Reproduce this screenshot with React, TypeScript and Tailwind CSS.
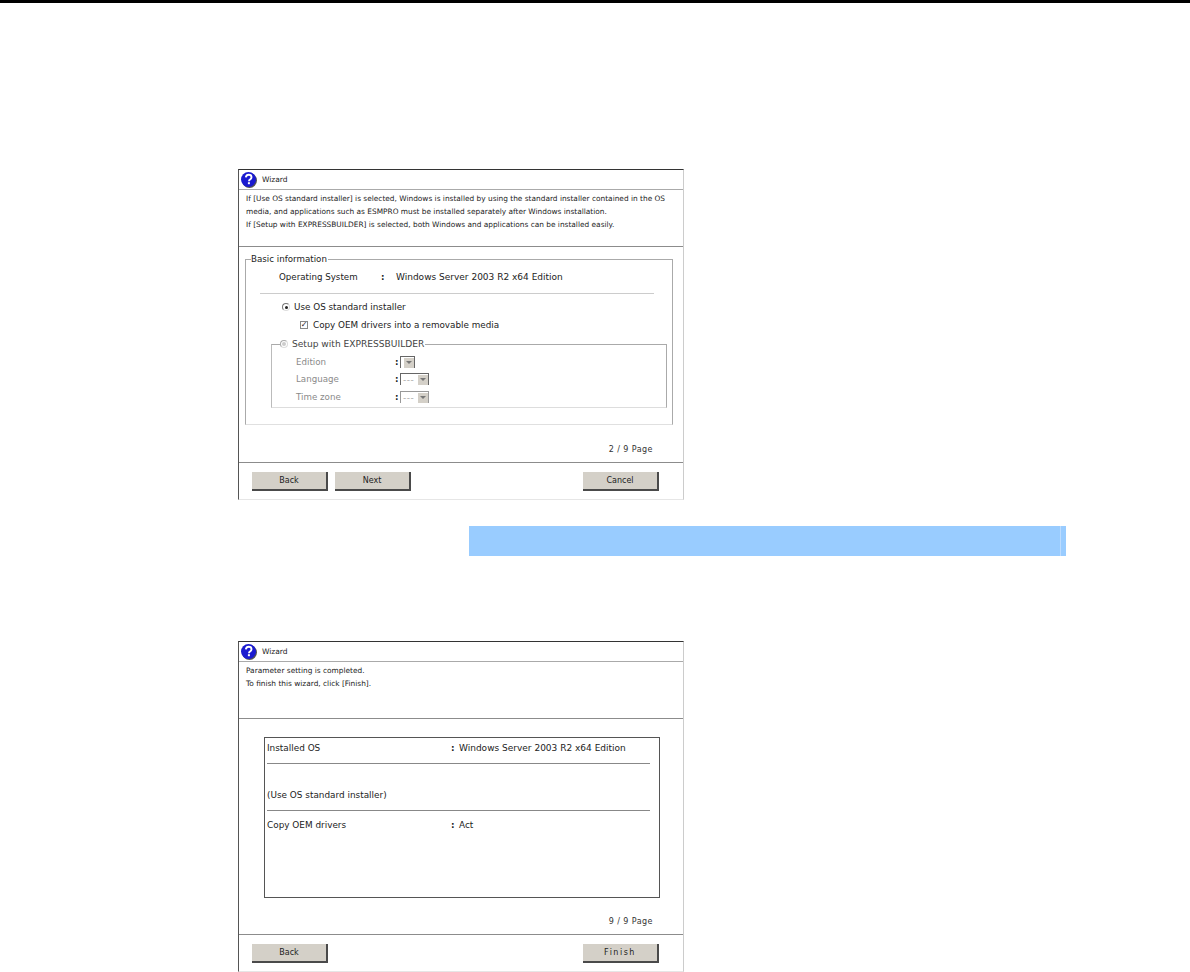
const font = { fontFamily: '"DejaVu Sans", sans-serif' };

function HelpIcon() {
  return (
    <svg width="18" height="18" viewBox="0 0 18 18" className="shrink-0">
      <circle cx="9.5" cy="9.5" r="7.5" fill="#555" />
      <circle cx="8.5" cy="8.5" r="7.5" fill="#1a1ad0" />
      <path d="M5.8 6.4c.3-1.7 1.4-2.6 2.9-2.6 1.6 0 2.8 1 2.8 2.4 0 1.1-.6 1.7-1.5 2.3-.8.5-1 .9-1 1.7" fill="none" stroke="#fff" strokeWidth="1.9" />
      <rect x="7.9" y="11.2" width="2" height="2" fill="#fff" />
    </svg>
  );
}

function Radio({ checked, disabled }: { checked?: boolean; disabled?: boolean }) {
  return (
    <span className={`flex h-[8px] w-[8px] items-center justify-center rounded-full border border-b-[#ddd] border-r-[#ddd] ${disabled ? "border-[#aaa]" : "border-[#777]"} bg-white`}>
      {checked && <span className="h-[3px] w-[3px] rounded-full bg-[#222]" />}
      {disabled && <span className="h-[4px] w-[4px] rounded-full bg-[#ccc]" />}
    </span>
  );
}

function Select({ wide, faint }: { wide?: boolean; faint?: boolean }) {
  return (
    <span className={`flex h-[12px] items-center justify-end border-t border-l ${faint ? "border-[#999]" : "border-[#666]"} border-r border-b-0 ${wide ? "w-[29px]" : "w-[15px]"}`}>
      {wide && <span className="flex-1 pl-[2px] text-[9px] leading-[10px] tracking-[0.5px] text-[#aaa]">---</span>}
      <span className="flex h-[10px] w-[10px] items-center justify-center bg-[#d4d0c8]">
        <span className="h-0 w-0 border-x-[3px] border-t-[3px] border-x-transparent border-t-[#777]" />
      </span>
    </span>
  );
}

function Btn({ label, wide }: { label: string; wide?: boolean }) {
  return (
    <button className={`h-[19px] w-[76px] border-r-2 border-b-2 border-[#4a4a4a] bg-[#d4d0c8] text-[8px] leading-[17px] text-[#222] ${wide ? "tracking-[1.5px]" : ""}`}>
      {label}
    </button>
  );
}

function Wizard({ desc, page, footer, children }: { desc: string[]; page: string; footer: React.ReactNode; children: React.ReactNode }) {
  return (
    <div className="ml-[238px] h-[331px] w-[446px] border-t border-r border-b border-l border-t-[#333] border-r-[#ccc] border-b-[#e6e6e6] border-l-[#555] text-[#222]">
      <div className="flex h-[20px] items-center border-b border-[#aaa] pl-[1px]">
        <HelpIcon />
        <span className="ml-[4px] text-[7.5px]">Wizard</span>
      </div>
      <div className="h-[57px] border-b border-[#8c8c8c] pt-[2px] pl-[7px] text-[7.4px] leading-[13px]">
        {desc.map((line) => (
          <div key={line}>{line}</div>
        ))}
      </div>
      <div className="h-[216px] border-b border-[#8c8c8c]">
        <div className="h-[196px]">{children}</div>
        <div className="pr-[30px] text-right text-[8px] leading-[14px] tracking-[0.45px] text-[#333]">{page}</div>
      </div>
      <div className="flex items-start pt-[9px] pl-[13px]">{footer}</div>
    </div>
  );
}

export default function App() {
  return (
    <div className="h-[972px] w-[1190px] overflow-hidden bg-white" style={font}>
      <div className="mb-[166px] h-[3px] bg-black" />

      <Wizard
        desc={[
          "If [Use OS standard installer] is selected, Windows is installed by using the standard installer contained in the OS",
          "media, and applications such as ESMPRO must be installed separately after Windows installation.",
          "If [Setup with EXPRESSBUILDER] is selected, both Windows and applications can be installed easily.",
        ]}
        page="2 / 9 Page"
        footer={
          <>
            <Btn label="Back" />
            <span className="ml-[7px] flex">
              <Btn label="Next" />
            </span>
            <span className="ml-[172px] flex">
              <Btn label="Cancel" />
            </span>
          </>
        }
      >
        <div className="pt-[12px] pl-[6px]">
          <div className="relative h-[166px] w-[428px] border-t border-r border-b border-l border-t-[#aaa] border-r-[#aaa] border-b-[#e0e0e0] border-l-[#aaa] text-[8.7px] leading-[14px]">
            <span className="absolute top-[-8px] left-[5px] bg-white pr-[1px] leading-[14px]">Basic information</span>
            <div className="flex pt-[10px] pl-[33px]">
              <span className="w-[102px]">Operating System</span>
              <span className="w-[15px] font-bold">:</span>
              <span className="text-[9px]">Windows Server 2003 R2 x64 Edition</span>
            </div>
            <div className="mt-[9px] ml-[14px] h-px w-[394px] bg-[#ccc]" />
            <div className="mt-[6px] flex items-center pl-[36px]">
              <Radio checked />
              <span className="ml-[4px] text-[8.8px]">Use OS standard installer</span>
            </div>
            <div className="mt-[4px] flex items-center pl-[54px]">
              <span className="flex h-[8px] w-[8px] items-center justify-center border border-[#888] text-[8px] leading-none font-bold">✓</span>
              <span className="ml-[5px] text-[8.8px]">Copy OEM drivers into a removable media</span>
            </div>
            <div className="relative mt-[12px] ml-[25px] h-[64px] w-[396px] border-t border-r border-b border-l border-t-[#aaa] border-r-[#aaa] border-b-[#ddd] border-l-[#bbb] text-[#8a8a8a]">
              <span className="absolute top-[-8px] left-[8px] flex items-center bg-white pr-[1px] text-[#444]">
                <Radio disabled />
                <span className="ml-[4px] text-[9.1px]">Setup with EXPRESSBUILDER</span>
              </span>
              <div className="flex items-center pt-[10px] pl-[24px]">
                <span className="w-[99px]">Edition</span>
                <span className="w-[5px] font-bold text-[#222]">:</span>
                <Select />
              </div>
              <div className="mt-[3px] flex items-center pl-[24px]">
                <span className="w-[99px]">Language</span>
                <span className="w-[5px] font-bold text-[#222]">:</span>
                <Select wide />
              </div>
              <div className="mt-[4px] flex items-center pl-[24px]">
                <span className="w-[99px]">Time zone</span>
                <span className="w-[5px] font-bold text-[#222]">:</span>
                <Select wide faint />
              </div>
            </div>
          </div>
        </div>
      </Wizard>

      <div className="mt-[26px] ml-[469px] flex h-[30px] w-[597px] bg-[#99ccff]">
        <div className="flex-1" />
        <div className="h-full w-px bg-[#bcdcff]" />
        <div className="w-[5px]" />
      </div>

      <div className="mt-[85px]">
        <Wizard
          desc={["Parameter setting is completed.", "To finish this wizard, click [Finish]."]}
          page="9 / 9 Page"
          footer={
            <>
              <Btn label="Back" />
              <span className="ml-[255px] flex">
                <Btn label="Finish" wide />
              </span>
            </>
          }
        >
          <div className="pt-[18px] pl-[25px]">
            <div className="h-[161px] w-[396px] border border-[#555] pt-[3px] pl-[2px] text-[8.9px] leading-[14px]">
              <div className="flex">
                <span className="w-[184px]">Installed OS</span>
                <span className="w-[8px] font-bold">:</span>
                <span className="text-[9px]">Windows Server 2003 R2 x64 Edition</span>
              </div>
              <div className="mt-[8px] h-px w-[383px] bg-[#888]" />
              <div className="mt-[24px]">(Use OS standard installer)</div>
              <div className="mt-[8px] h-px w-[383px] bg-[#888]" />
              <div className="mt-[7px] flex">
                <span className="w-[184px]">Copy OEM drivers</span>
                <span className="w-[8px] font-bold">:</span>
                <span>Act</span>
              </div>
            </div>
          </div>
        </Wizard>
      </div>
    </div>
  );
}
